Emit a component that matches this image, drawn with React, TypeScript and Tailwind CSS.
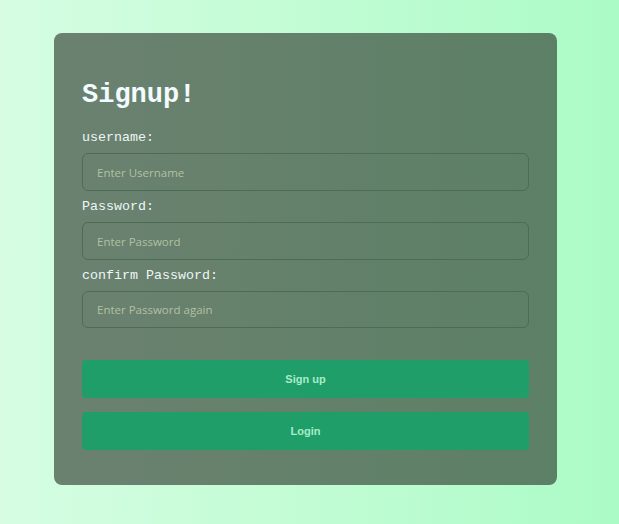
export default function App() {
  const inputCls =
    "mt-[5px] h-[38px] w-full rounded-[6px] border border-[#4d6c55] bg-transparent px-[14px] text-[11.5px] font-['Open_Sans',sans-serif] placeholder:text-[#b3c0a2] outline-none";
  const labelCls = "mt-[6px] text-[13.33px] leading-[20px] text-[#eef6f4] font-['Liberation_Mono',monospace]";
  return (
    <div className="w-[619px] h-[524px] bg-gradient-to-r from-[#d6fde2] to-[#abfbc6] pt-[33px] pl-[54px]">
      <div className="w-[503px] h-[452px] rounded-[8px] bg-gradient-to-r from-[#6b8170] to-[#5c8065] px-[28px] pt-[45px] flex flex-col">
        <h1 className="text-[27px] leading-[34px] font-bold text-[#f2fbff] font-['Liberation_Mono',monospace] mb-[16px]">Signup!</h1>
        <label className="text-[13.33px] leading-[20px] text-[#eef6f4] font-['Liberation_Mono',monospace]">username:</label>
        <input placeholder="Enter Username" className={inputCls} />
        <label className={labelCls}>Password:</label>
        <input placeholder="Enter Password" className={inputCls} />
        <label className={labelCls}>confirm Password:</label>
        <input placeholder="Enter Password again" className={inputCls.replace("h-[38px]", "h-[37px]")} />
        <button className="mt-[32px] h-[38px] w-full rounded-[4px] bg-[#1f9e69] text-[11px] font-bold text-[#a9ebcb] font-['Liberation_Sans',sans-serif]">Sign up</button>
        <button className="mt-[14px] h-[38px] w-full rounded-[4px] bg-[#1f9e69] text-[11px] font-bold text-[#a9ebcb] font-['Liberation_Sans',sans-serif]">Login</button>
      </div>
    </div>
  );
}
